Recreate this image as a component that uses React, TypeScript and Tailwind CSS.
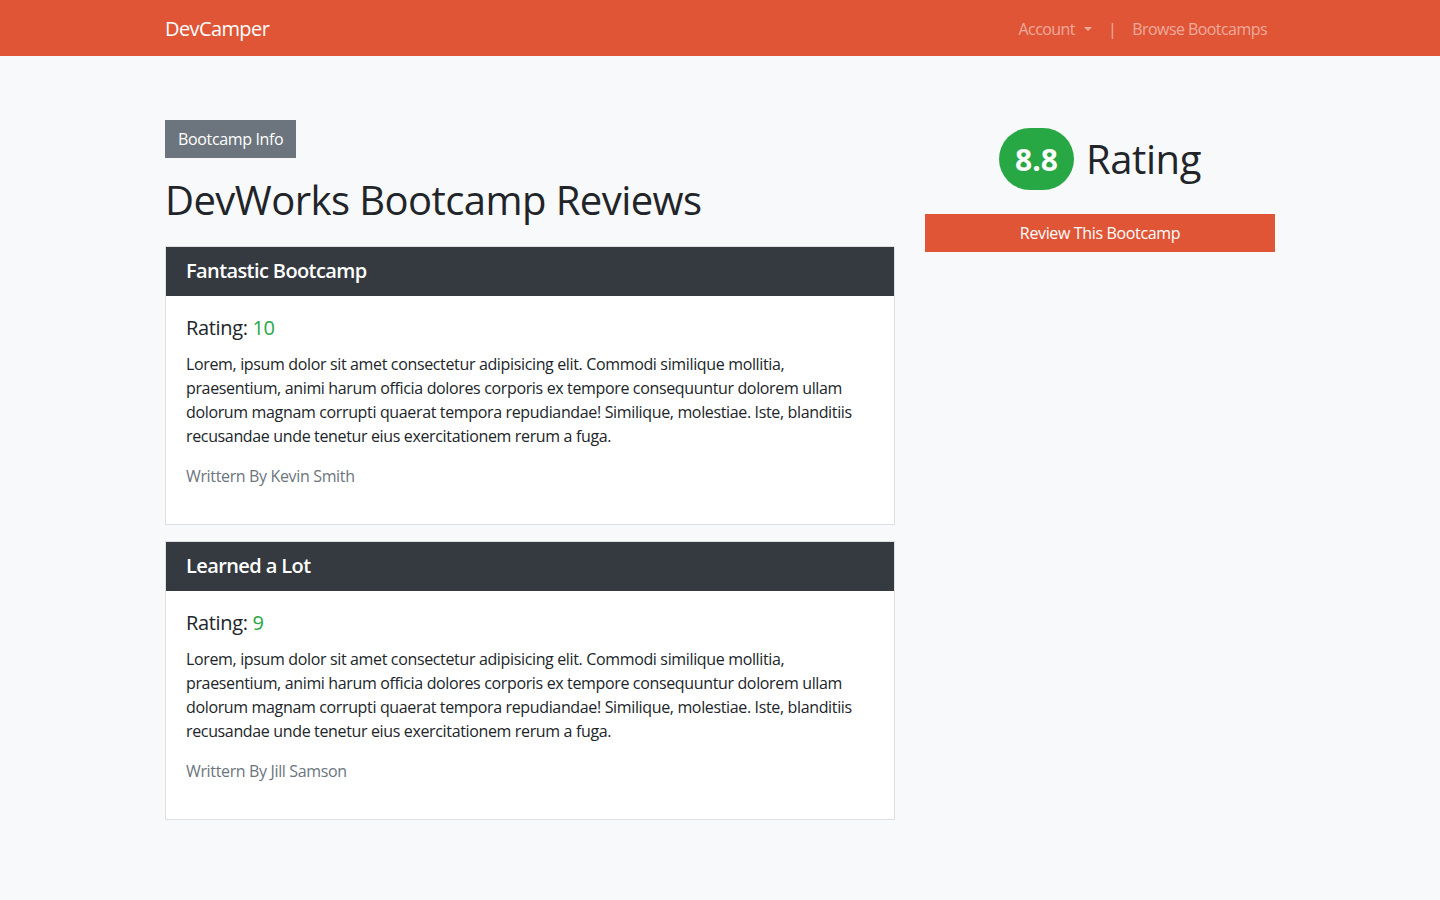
import React from 'react'

interface Review {
  id: number
  title: string
  rating: number
  text: string
  author: string
}

const lorem =
  'Lorem, ipsum dolor sit amet consectetur adipisicing elit. Commodi similique mollitia, praesentium, animi harum officia dolores corporis ex tempore consequuntur dolorem ullam dolorum magnam corrupti quaerat tempora repudiandae! Similique, molestiae. Iste, blanditiis recusandae unde tenetur eius exercitationem rerum a fuga.'

const reviews: Review[] = [
  { id: 1, title: 'Fantastic Bootcamp', rating: 10, text: lorem, author: 'Kevin Smith' },
  { id: 2, title: 'Learned a Lot', rating: 9, text: lorem, author: 'Jill Samson' },
]

function Navbar() {
  return (
    <nav className="h-14 bg-[#e05536]">
      <div className="mx-auto flex h-full w-[1140px] items-center justify-between px-[15px]">
        <a href="#" className="pt-0.5 text-[20px] leading-[30px] text-white tracking-[-0.03em]">
          DevCamper
        </a>
        <ul className="flex items-center pt-0.5 text-[16px] tracking-[-0.035em] text-white/50">
          <li className="flex items-center px-2">
            Account
            <span className="ml-[9px] inline-block h-0 w-0 border-x-[0.3em] border-t-[0.3em] border-x-transparent border-t-white/50" />
          </li>
          <li className="px-2">|</li>
          <li className="px-2">Browse Bootcamps</li>
        </ul>
      </div>
    </nav>
  )
}

function ReviewCard({ review }: { review: Review }) {
  return (
    <div className="mb-4 border border-[#dfdfdf] bg-white">
      <h5 className="border-b border-[#343a40] bg-[#343a40] px-5 py-3 text-[20px] font-semibold leading-6 tracking-[-0.03em] text-white">
        {review.title}
      </h5>
      <div className="px-5 pt-5 pb-9">
        <h5 className="mb-3 text-[20px] font-medium leading-6">
          Rating: <span className="text-[#28a745]">{review.rating}</span>
        </h5>
        <p className="mb-4 text-[16px] leading-6">{review.text}</p>
        <p className="text-[16px] leading-6 text-[#6c757d]">Writtern By {review.author}</p>
      </div>
    </div>
  )
}

export default function App() {
  return (
    <div
      className="min-h-[900px] bg-[#f8f9fa] text-[#212529] tracking-[-0.022em]"
      style={{ fontFamily: '"Open Sans", "Noto Sans", Arial, sans-serif' }}
    >
      <Navbar />
      <section className="mx-auto mt-12 w-[1140px] px-[15px]">
        <div className="flex gap-[30px]">
          <div className="w-[730px]">
            <a
              href="#"
              className="my-4 inline-block border border-[#6c757d] bg-[#6c757d] px-3 py-1.5 text-[16px] leading-6 text-white"
            >
              Bootcamp Info
            </a>
            <h1 className="mb-6 pt-1 text-[40px] font-medium leading-[44px] tracking-[-0.014em]">
              DevWorks Bootcamp Reviews
            </h1>
            {reviews.map((review) => (
              <ReviewCard key={review.id} review={review} />
            ))}
          </div>

          <div className="w-[350px]">
            <h1 className="mt-6 flex items-center justify-center gap-3 text-[40px] font-medium leading-[62px] tracking-[-0.01em]">
              <span className="flex h-[62px] w-[75px] items-center justify-center rounded-full bg-[#28a745] pt-0.5 text-[30px] font-bold tracking-normal text-white">
                8.8
              </span>
              Rating
            </h1>
            <a
              href="#"
              className="mt-6 block border border-[#e05536] bg-[#e05536] py-1.5 text-center text-[16px] leading-6 text-white"
            >
              Review This Bootcamp
            </a>
          </div>
        </div>
      </section>
    </div>
  )
}
